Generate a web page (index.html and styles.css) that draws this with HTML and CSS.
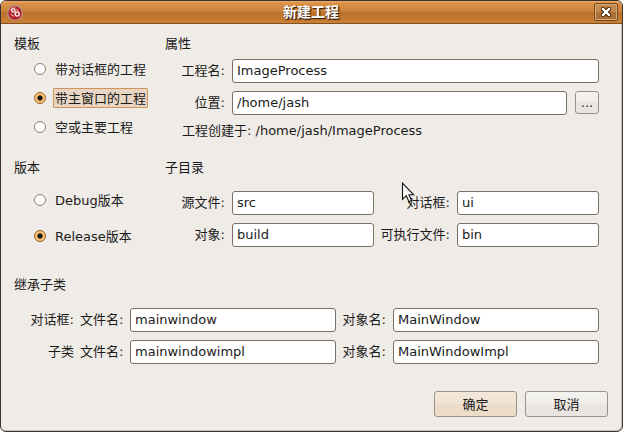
FILE: index.html
```html
<!DOCTYPE html>
<html lang="zh-CN">
<head>
<meta charset="utf-8">
<title>新建工程</title>
<link rel="stylesheet" href="styles.css">
</head>
<body>
<div class="window">
  <header class="titlebar">
    <svg class="app-icon" width="16" height="16" viewBox="0 0 16 16">
      <circle cx="8" cy="8" r="7.3" fill="#b51c24" stroke="#b5958a" stroke-width="1.3"/>
      <path d="M3 5.5Q5 2 9 2.2" fill="none" stroke="#d66a68" stroke-width="1.2"/>
      <circle cx="6.4" cy="5.4" r="1.7" fill="#b51c24" stroke="#eee2e0" stroke-width="1.5"/>
      <circle cx="10.2" cy="9" r="2" fill="#b51c24" stroke="#eee2e0" stroke-width="1.6"/>
      <path d="M9 4.5l2.5 1M4 9l2.5 2.5" stroke="#dba9a6" stroke-width="1.3"/>
    </svg>
    <h1 class="title">新建工程</h1>
    <div class="close">
      <svg width="10" height="10" viewBox="0 0 10 10" shape-rendering="crispEdges">
        <path d="M0 0h4v1h2V0h4v4H9v2h1v4H6V9H4v1H0V6h1V4H0z" fill="#6b431d"/>
        <path d="M1 1h2v1h1v1h2V2h1V1h2v2H8v1H7v2h1v1h1v2H7V8H6V7H4v1H3v1H1V7h1V6h1V4H2V3H1z" fill="#fff"/>
      </svg>
    </div>
  </header>
  <main class="content">
    <div class="columns top">
      <section class="choices">
        <h2>模板</h2>
        <div class="option"><i class="radio"></i><span class="caption">带对话框的工程</span></div>
        <div class="option"><i class="radio on"></i><span class="caption focused">带主窗口的工程</span></div>
        <div class="option"><i class="radio"></i><span class="caption">空或主要工程</span></div>
      </section>
      <section class="fields">
        <h2>属性</h2>
        <div class="row"><span class="label">工程名:</span><div class="entry">ImageProcess</div></div>
        <div class="row"><span class="label">位置:</span><div class="entry">/home/jash</div><div class="button browse">...</div></div>
        <p class="info">工程创建于: /home/jash/ImageProcess</p>
      </section>
    </div>
    <div class="columns middle">
      <section class="choices wide">
        <h2>版本</h2>
        <div class="option"><i class="radio"></i><span class="caption">Debug版本</span></div>
        <div class="option"><i class="radio on"></i><span class="caption">Release版本</span></div>
      </section>
      <section class="fields">
        <h2>子目录</h2>
        <div class="row"><span class="label">源文件:</span><div class="entry">src</div><span class="label second">对话框:</span><div class="entry">ui</div></div>
        <div class="row"><span class="label">对象:</span><div class="entry">build</div><span class="label second">可执行文件:</span><div class="entry">bin</div></div>
      </section>
    </div>
    <section class="subclass">
      <h2>继承子类</h2>
      <div class="row"><span class="kind">对话框:</span><span class="label">文件名:</span><div class="entry">mainwindow</div><span class="label second">对象名:</span><div class="entry">MainWindow</div></div>
      <div class="row"><span class="kind">子类</span><span class="label">文件名:</span><div class="entry">mainwindowimpl</div><span class="label second">对象名:</span><div class="entry">MainWindowImpl</div></div>
    </section>
    <footer class="actions">
      <div class="button primary">确定</div>
      <div class="button">取消</div>
    </footer>
  </main>
  <svg class="pointer" width="14" height="22" viewBox="0 0 14 22">
    <path d="M1.5 1.2v16l3.8-3.5 2.7 6 2.5-1.2-2.6-5.7h4.7z" fill="#fff" stroke="#111" stroke-width="1.1"/>
  </svg>
</div>
</body>
</html>
```
FILE: styles.css
```css
* { box-sizing: border-box; }

body {
  margin: 0;
  background: #fff;
  color: #1a1a1a;
  font: 13px/20px "DejaVu Sans", "Noto Sans CJK SC", sans-serif;
}

.window {
  position: relative;
  width: 623px;
  height: 432px;
  overflow: hidden;
  border: 1px solid #3a3030;
  border-radius: 6px;
  background: #efebe6;
  box-shadow: inset -1px -1px 0 #c9c0b6;
}

.titlebar {
  display: flex;
  align-items: center;
  height: 23px;
  padding: 0 4px 0 6px;
  background: linear-gradient(#efab6a 0, #dd9249 2px, #cc8138 11px, #b9712c 11px, #cb8035 22px);
  border-bottom: 1px solid #80501f;
}

.app-icon { flex: none; margin-top: 1px; }

.title {
  flex: 1;
  margin: 0 0 0 5px;
  color: #fff;
  font-size: 14px;
  font-weight: bold;
  line-height: 22px;
  text-align: center;
  text-shadow: 1px 1px 1px #3d2208, 1px 1px 1px #3d2208;
}

.close {
  display: flex;
  align-items: center;
  justify-content: center;
  width: 24px;
  height: 18px;
  border: 1px solid #774819;
  border-radius: 2px;
  background: linear-gradient(#c3884f 50%, #aa6f37 50%);
  box-shadow: inset 0 0 0 1px #d5a878;
}

.content { padding: 10px 23px 0 13px; }

h2 {
  height: 20px;
  margin: 0;
  font-size: 13px;
  font-weight: normal;
  line-height: 20px;
}

.columns { display: flex; }
.top { height: 124px; }
.middle { height: 117px; }
.choices { width: 151px; }
.fields { flex: 1; }

.option {
  display: flex;
  align-items: center;
  height: 20px;
  margin-bottom: 9px;
  padding-left: 20px;
}
.choices h2 { margin-bottom: 5px; }
.wide h2 { margin-bottom: 12px; }
.wide .option { margin-bottom: 16px; }

.radio {
  width: 12px;
  height: 12px;
  margin-right: 7px;
  border: 1px solid #8b8178;
  border-radius: 50%;
  background: #fff;
}
.radio.on {
  border-color: #98652c;
  background: radial-gradient(circle, #1b1b1b 2.3px, #fcc272 3px);
}

.caption {
  height: 20px;
  padding: 0 1px;
  border: 1px solid transparent;
  line-height: 20px;
  white-space: nowrap;
}
.focused {
  border-color: #cf9459;
  border-radius: 1px;
  background: #e8d5c3;
}

.row {
  display: flex;
  height: 24px;
  margin-bottom: 8px;
}
.fields h2 { margin-bottom: 5px; }
.middle .fields h2 { margin-bottom: 13px; }

.label {
  width: 60px;
  margin-right: 7px;
  line-height: 24px;
  text-align: right;
  white-space: nowrap;
}
.label.second { width: 76px; }

.entry {
  flex: 1 1 0;
  padding: 0 4px;
  border: 1px solid #7b7067;
  border-radius: 3px;
  background: #fff;
  line-height: 22px;
}

.info {
  margin: -2px 0 0 17px;
  white-space: nowrap;
}

.subclass .kind {
  width: 60px;
  margin-right: 6px;
  line-height: 24px;
  text-align: right;
}
.subclass .label { width: 43px; margin-right: 7px; }
.subclass .label.second { width: 50px; }
.subclass h2 { margin-bottom: 13px; }

.button {
  width: 83px;
  height: 26px;
  border: 1px solid #9a9086;
  border-radius: 3px;
  background: linear-gradient(#f5f3f1, #efece9 50%, #e9e5e0 50%, #e9e4df);
  line-height: 25px;
  text-align: center;
}
.primary { background: linear-gradient(#f5e9dc, #f0e2d1 50%, #ecdcc8 50%, #eddcc8); }
.browse {
  width: 24px;
  height: 23px;
  margin-left: 8px;
  line-height: 22px;
}

.actions {
  display: flex;
  justify-content: flex-end;
  gap: 8px;
  margin: 27px -9px 0 0;
}

.pointer {
  position: absolute;
  left: 400px;
  top: 181px;
}
```
